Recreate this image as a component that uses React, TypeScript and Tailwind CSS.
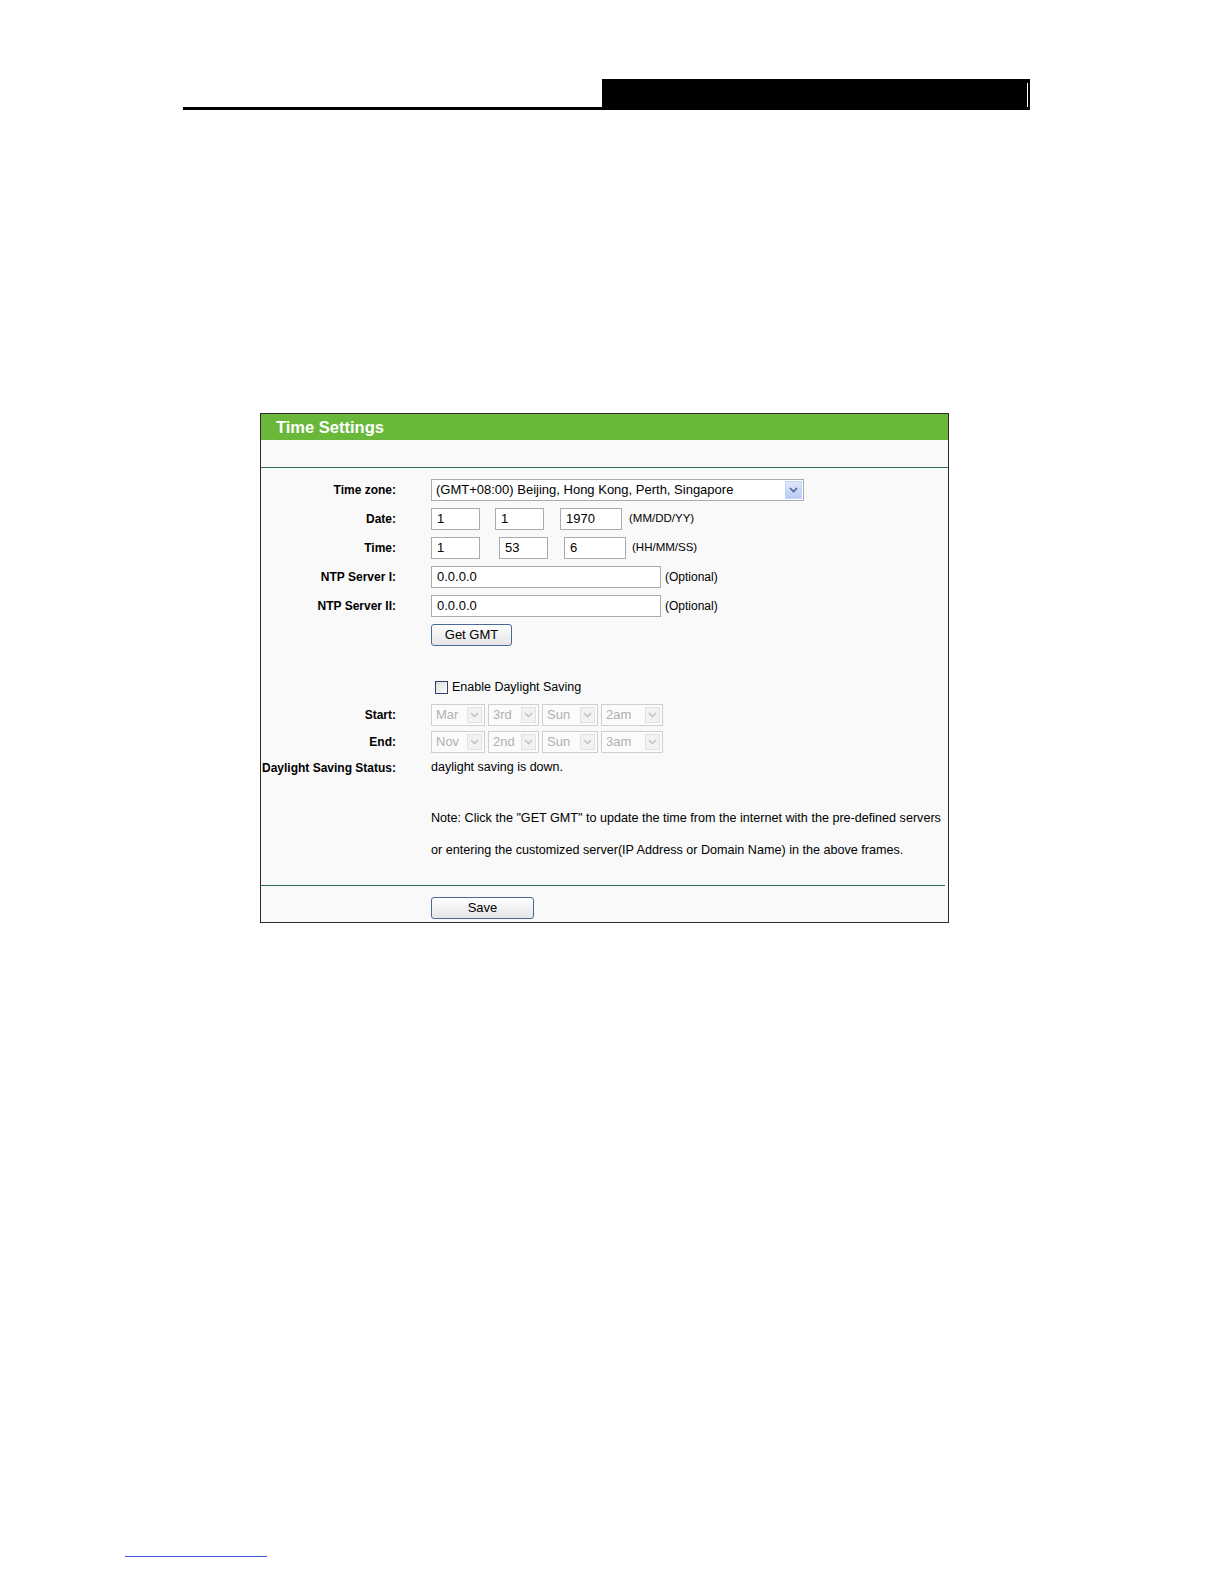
import React from "react";

const font = { fontFamily: '"Liberation Sans", Arial, sans-serif' };

const Label: React.FC<{ text: string }> = ({ text }) => (
  <div className="w-[135px] shrink-0 flex justify-end whitespace-nowrap text-[12px] font-bold text-black">
    {text}
  </div>
);

const Row: React.FC<{ label?: string; h: string; children?: React.ReactNode }> = ({ label, h, children }) => (
  <div className={`flex items-center ${h}`}>
    <Label text={label ?? ""} />
    <div className="ml-[35px] flex items-center">{children}</div>
  </div>
);

const TextBox: React.FC<{ value: string; w: string; className?: string }> = ({ value, w, className = "" }) => (
  <div className={`${w} h-[22px] border border-[#a5acb2] bg-white flex items-center pl-[5px] text-[13px] text-black ${className}`}>
    {value}
  </div>
);

const Chevron: React.FC<{ color: string }> = ({ color }) => (
  <svg width="9" height="6" viewBox="0 0 9 6">
    <path d="M1 1 L4.5 4.5 L8 1" fill="none" stroke={color} strokeWidth="1.6" />
  </svg>
);

const DisabledSelect: React.FC<{ value: string; w: string }> = ({ value, w }) => (
  <div className={`${w} h-[22px] border border-[#cfcfcf] bg-[#fbfbfb] flex items-center justify-between pl-[4px] pr-[2px] text-[13px] text-[#b0b0b0]`}>
    <span>{value}</span>
    <div className="w-[15px] h-[16px] border border-[#e2e2e2] bg-[#f2f2f2] flex items-center justify-center">
      <Chevron color="#c4c4c4" />
    </div>
  </div>
);

const Button: React.FC<{ text: string; w: string }> = ({ text, w }) => (
  <div className={`${w} h-[22px] rounded-[3px] border border-[#4a6a98] bg-gradient-to-b from-white to-[#e4e4e4] flex items-center justify-center text-[13px] text-black`}>
    {text}
  </div>
);

const App: React.FC = () => {
  return (
    <div className="w-full bg-white flow-root" style={font}>
      {/* page header */}
      <div className="ml-[183px] w-[847px] pt-[79px]">
        <div className="flex justify-end">
          <div className="w-[428px] h-[28px] bg-black flex justify-end pr-[2px]">
            <div className="w-px mt-[4px] bg-white" />
          </div>
        </div>
        <div className="h-[3px] bg-black" />
      </div>

      {/* panel */}
      <div className="ml-[260px] mt-[303px] w-[689px] border border-[#2b2b2b] bg-[#f9f9f9] overflow-hidden">
        <div className="h-[26px] bg-[#69b83a] flex items-center pl-[15px] text-[16.5px] font-bold text-white">
          Time Settings
        </div>
        <div className="h-[27px]" />
        <div className="h-px bg-[#2f6f50]" />

        <div className="pt-[7px]">
          <Row label="Time zone:" h="h-[29px]">
            <div className="w-[373px] h-[22px] border border-[#a5acb2] bg-white flex items-center justify-between pl-[4px] pr-[1px] text-[13px] text-black">
              <span>(GMT+08:00) Beijing, Hong Kong, Perth, Singapore</span>
              <div className="w-[17px] h-[18px] border border-[#c3d3fd] bg-gradient-to-b from-[#dfe8fb] to-[#b9cbf3] flex items-center justify-center">
                <Chevron color="#4d6185" />
              </div>
            </div>
          </Row>
          <Row label="Date:" h="h-[29px]">
            <TextBox value="1" w="w-[49px]" />
            <TextBox value="1" w="w-[49px]" className="ml-[15px]" />
            <TextBox value="1970" w="w-[62px]" className="ml-[16px]" />
            <span className="ml-[7px] text-[11.5px] text-black">(MM/DD/YY)</span>
          </Row>
          <Row label="Time:" h="h-[29px]">
            <TextBox value="1" w="w-[49px]" />
            <TextBox value="53" w="w-[49px]" className="ml-[19px]" />
            <TextBox value="6" w="w-[62px]" className="ml-[16px]" />
            <span className="ml-[6px] text-[11.5px] text-black">(HH/MM/SS)</span>
          </Row>
          <Row label="NTP Server I:" h="h-[29px]">
            <TextBox value="0.0.0.0" w="w-[230px]" className="pl-[3px]" />
            <span className="ml-[4px] text-[12px] text-black">(Optional)</span>
          </Row>
          <Row label="NTP Server II:" h="h-[29px]">
            <TextBox value="0.0.0.0" w="w-[230px]" className="pl-[3px]" />
            <span className="ml-[4px] text-[12px] text-black">(Optional)</span>
          </Row>
          <Row h="h-[29px]">
            <Button text="Get GMT" w="w-[81px]" />
          </Row>

          <div className="h-[25px]" />

          <Row h="h-[27px]">
            <div className="ml-[4px] w-[13px] h-[13px] border border-[#30446a] bg-gradient-to-br from-[#dcdcd7] to-white" />
            <span className="ml-[4px] text-[12.5px] text-black">Enable Daylight Saving</span>
          </Row>
          <Row label="Start:" h="h-[27px]">
            <div className="flex gap-[3px]">
              <DisabledSelect value="Mar" w="w-[54px]" />
              <DisabledSelect value="3rd" w="w-[51px]" />
              <DisabledSelect value="Sun" w="w-[56px]" />
              <DisabledSelect value="2am" w="w-[62px]" />
            </div>
          </Row>
          <Row label="End:" h="h-[27px]">
            <div className="flex gap-[3px]">
              <DisabledSelect value="Nov" w="w-[54px]" />
              <DisabledSelect value="2nd" w="w-[51px]" />
              <DisabledSelect value="Sun" w="w-[56px]" />
              <DisabledSelect value="3am" w="w-[62px]" />
            </div>
          </Row>
          <Row label="Daylight Saving Status:" h="h-[25px]">
            <span className="text-[12.5px] text-black">daylight saving is down.</span>
          </Row>

          <div className="h-[22px]" />

          <div className="pl-[170px] text-[12.6px] text-black">
            <div className="h-[32px] flex items-center whitespace-nowrap">
              Note: Click the "GET GMT" to update the time from the internet with the pre-defined servers
            </div>
            <div className="h-[32px] flex items-center whitespace-nowrap">
              or entering the customized server(IP Address or Domain Name) in the above frames.
            </div>
          </div>

          <div className="h-[19px]" />
          <div className="w-[684px] h-px bg-[#2f6f50]" />
          <div className="pl-[170px] pt-[11px] pb-[3px]">
            <Button text="Save" w="w-[103px]" />
          </div>
        </div>
      </div>

      {/* footnote separator */}
      <div className="ml-[125px] mt-[633px] mb-[20px] w-[142px] h-px bg-[#3b5bd6]" />
    </div>
  );
};

export default App;
